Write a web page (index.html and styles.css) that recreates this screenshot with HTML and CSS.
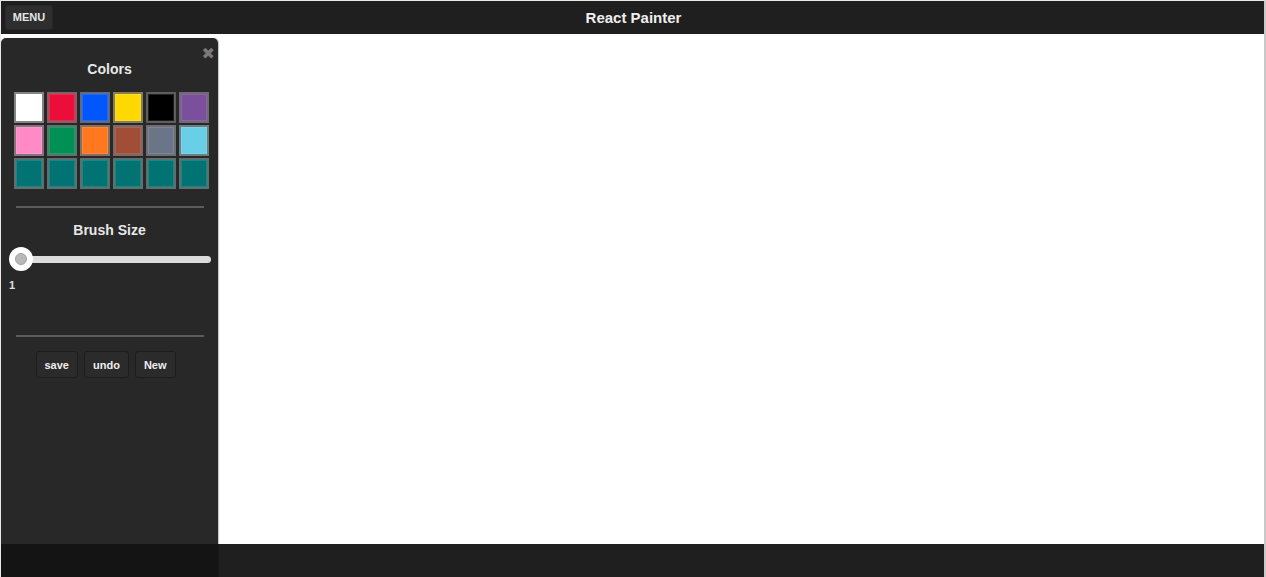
FILE: index.html
```html
<!DOCTYPE html>
<html lang="en">
<head>
<meta charset="utf-8">
<title>React Painter</title>
<link rel="stylesheet" href="styles.css">
</head>
<body>
<div class="app">
  <header class="topbar">
    <button class="menu-btn">MENU</button>
    <div class="title">React Painter</div>
  </header>
  <main class="canvas-area"></main>
  <footer class="bottombar"></footer>

  <aside class="drawer">
    <span class="close">&#x2716;</span>
    <h2 class="section-title">Colors</h2>
    <div class="swatches">
      <span class="swatch" style="background:#ffffff"></span>
      <span class="swatch" style="background:#eb0e3b"></span>
      <span class="swatch" style="background:#0257fc"></span>
      <span class="swatch" style="background:#ffd800"></span>
      <span class="swatch" style="background:#000000"></span>
      <span class="swatch" style="background:#7a4f9c"></span>
      <span class="swatch" style="background:#ff8ac6"></span>
      <span class="swatch" style="background:#008f55"></span>
      <span class="swatch" style="background:#ff7820"></span>
      <span class="swatch" style="background:#a24e36"></span>
      <span class="swatch" style="background:#6b7588"></span>
      <span class="swatch" style="background:#68cfe6"></span>
      <span class="swatch" style="background:#017373"></span>
      <span class="swatch" style="background:#017373"></span>
      <span class="swatch" style="background:#017373"></span>
      <span class="swatch" style="background:#017373"></span>
      <span class="swatch" style="background:#017373"></span>
      <span class="swatch" style="background:#017373"></span>
    </div>
    <hr class="divider">
    <h2 class="section-title brush">Brush Size</h2>
    <div class="slider">
      <div class="track"></div>
      <div class="thumb"><div class="thumb-dot"></div></div>
    </div>
    <div class="size-val">1</div>
    <hr class="divider second">
    <div class="actions">
      <button class="act">save</button>
      <button class="act">undo</button>
      <button class="act">New</button>
    </div>
  </aside>
</div>
</body>
</html>
```

FILE: styles.css
```css
* { box-sizing: border-box; }
html, body { margin: 0; padding: 0; }
body {
  font-family: "Liberation Sans", Arial, sans-serif;
  background: #ffffff;
  width: 1266px;
  height: 577px;
  overflow: hidden;
}
.app {
  position: relative;
  width: 1266px;
  height: 577px;
  border-top: 1px solid #e8e8e8;
  border-left: 1px solid #e8e8e8;
  border-right: 2px solid #c8c8c8;
  display: flex;
  flex-direction: column;
}
.topbar {
  height: 33px;
  background: #1f1f1f;
  display: flex;
  align-items: center;
  position: relative;
  padding-left: 4px;
}
.menu-btn {
  height: 25px;
  width: 48px;
  margin-top: -1px;
  background: #2e2e2e;
  border: 1px solid #262626;
  border-radius: 3px;
  color: #e6e6e6;
  font-family: inherit;
  font-weight: bold;
  font-size: 11px;
  padding: 0;
}
.title {
  position: absolute;
  left: 2px;
  right: 0;
  top: 0;
  height: 33px;
  line-height: 33px;
  text-align: center;
  color: #eeeeee;
  font-weight: bold;
  font-size: 15px;
  pointer-events: none;
}
.canvas-area {
  flex: 1;
  background: #ffffff;
}
.bottombar {
  height: 33px;
  background: #1f1f1f;
}
.drawer {
  position: absolute;
  left: 0;
  top: 37px;
  bottom: 0;
  width: 217px;
  background: linear-gradient(#282828 calc(100% - 33px), #141414 0);
  border-radius: 5px 5px 0 0;
  box-shadow: 1px 0 1px rgba(0,0,0,0.25);
  color: #eeeeee;
  padding: 0 7px 0 13px;
}
.close {
  position: absolute;
  right: 3px;
  top: 6px;
  color: #7a7a7a;
  font-size: 16px;
  font-weight: bold;
  font-family: "DejaVu Sans", sans-serif;
}
.section-title {
  margin: 0;
  padding-top: 23px;
  text-align: center;
  font-size: 14px;
  font-weight: bold;
  line-height: 16px;
  color: #e8e8e8;
  margin-left: -6px;
}
.swatches {
  margin-top: 15px;
  display: grid;
  grid-template-columns: repeat(6, 30px);
  grid-auto-rows: 31px;
  column-gap: 3px;
  row-gap: 2px;
}
.swatch {
  display: block;
  border: 2px solid rgba(110,110,110,0.85);
  box-shadow: inset 0 0 0 1px rgba(255,255,255,0.12);
}
.divider {
  margin: 17px 0 0 2px;
  width: 188px;
  border: 0;
  height: 2px;
  background: #5c5c5c;
}
.section-title.brush {
  padding-top: 14px;
}
.slider {
  position: relative;
  height: 24px;
  margin: 9px 0 0 -4px;
}
.track {
  position: absolute;
  left: 10px;
  right: 0;
  top: 9px;
  height: 7px;
  border-radius: 4px;
  background: #dcdcdc;
}
.thumb {
  position: absolute;
  left: -1px;
  top: 0;
  width: 24px;
  height: 24px;
  border-radius: 50%;
  background: #ffffff;
  display: flex;
  align-items: center;
  justify-content: center;
}
.thumb-dot {
  width: 12px;
  height: 12px;
  border-radius: 50%;
  background: #b8b8b8;
  border: 1px solid #a0a0a0;
}
.size-val {
  margin: 8px 0 0 -5px;
  font-size: 11px;
  font-weight: bold;
  color: #e0e0e0;
}
.divider.second {
  margin-top: 44px;
}
.actions {
  display: flex;
  justify-content: center;
  gap: 6px;
  margin: 14px 0 0 -14px;
}
.act {
  height: 27px;
  padding: 0 8px;
  background: #2b2b2b;
  border: 1px solid #1d1d1d;
  border-radius: 3px;
  color: #eeeeee;
  font-family: inherit;
  font-weight: bold;
  font-size: 11px;
}
```
